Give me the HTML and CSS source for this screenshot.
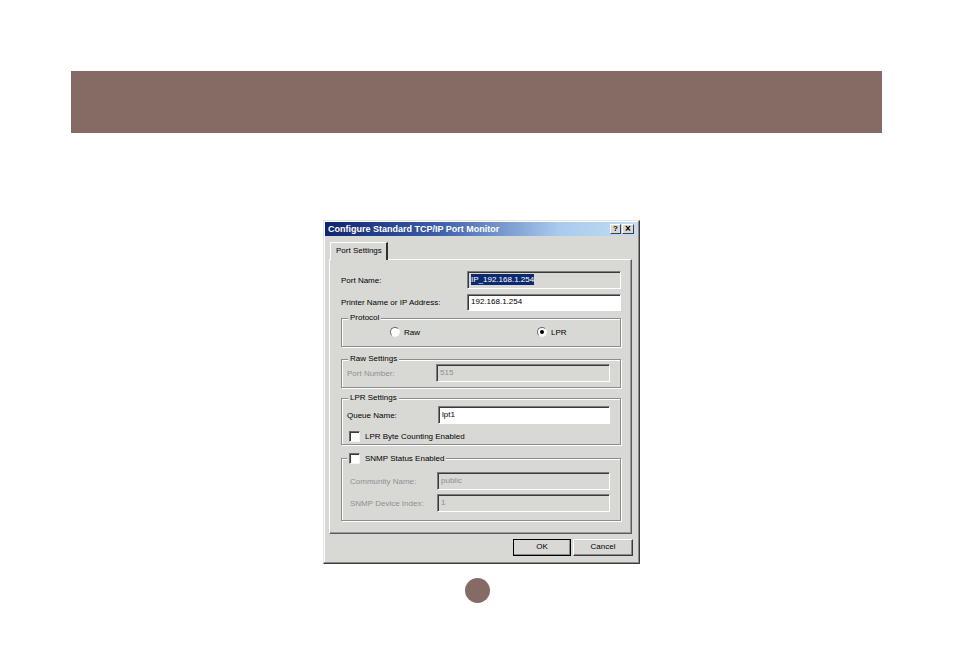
FILE: index.html
```html
<!DOCTYPE html>
<html>
<head>
<meta charset="utf-8">
<title>Configure Standard TCP/IP Port Monitor</title>
<link rel="stylesheet" href="styles.css">
</head>
<body>
<div class="banner"></div>

<div class="dialog">
  <div class="titlebar">
    <span class="title">Configure Standard TCP/IP Port Monitor</span>
    <div class="tbtns">
      <span class="tbtn">?</span>
      <span class="tbtn x">×</span>
    </div>
  </div>
  <div class="dbody">
    <div class="tabs"><div class="tab">Port Settings</div></div>
    <div class="panel">
      <div class="row r1">
        <span class="lbl">Port Name:</span>
        <div class="field ro w154"><span class="sel">IP_192.168.1.254</span></div>
      </div>
      <div class="row r2">
        <span class="lbl">Printer Name or IP Address:</span>
        <div class="field w154 h17">192.168.1.254</div>
      </div>

      <div class="group g-proto">
        <div class="legend">Protocol</div>
        <div class="radios">
          <label class="radio-item raw"><span class="radio"></span>Raw</label>
          <label class="radio-item lpr"><span class="radio on"></span>LPR</label>
        </div>
      </div>

      <div class="group g-raw">
        <div class="legend">Raw Settings</div>
        <div class="grow gr1">
          <span class="lbl dis">Port Number:</span>
          <div class="field ro dis w174">515</div>
        </div>
      </div>

      <div class="group g-lpr">
        <div class="legend">LPR Settings</div>
        <div class="grow gr1 lq">
          <span class="lbl">Queue Name:</span>
          <div class="field w172">lpt1</div>
        </div>
        <label class="check-row"><span class="check"></span>LPR Byte Counting Enabled</label>
      </div>

      <div class="group g-snmp">
        <div class="legend lcheck"><span class="check"></span>SNMP Status Enabled</div>
        <div class="grow gs1">
          <span class="lbl dis">Community Name:</span>
          <div class="field ro dis w173">public</div>
        </div>
        <div class="grow gs2">
          <span class="lbl dis">SNMP Device Index:</span>
          <div class="field ro dis w173">1</div>
        </div>
      </div>
    </div>
    <div class="buttons">
      <div class="btn ok">OK</div>
      <div class="btn cancel">Cancel</div>
    </div>
  </div>
</div>

<div class="dot"></div>
</body>
</html>
```

FILE: styles.css
```css
* { box-sizing: border-box; }
html, body { margin: 0; padding: 0; background: #ffffff; }
body {
  width: 954px;
  height: 664px;
  overflow: hidden;
  font-family: "Liberation Sans", Arial, sans-serif;
  font-size: 8px;
  color: #000;
}

.banner {
  margin: 71px 0 0 71px;
  width: 811px;
  height: 62px;
  background: #866a64;
}

.dialog {
  margin: 87px 0 0 323px;
  width: 317px;
  height: 344px;
  background: #d8d9d5;
  border: 1px solid;
  border-color: #e4e4e0 #3c3c3c #3c3c3c #e4e4e0;
  box-shadow: inset -1px -1px 0 #8a8a88, inset 1px 1px 0 #ffffff;
  padding: 1px 2px 1px 1px;
  display: flex;
  flex-direction: column;
}

.titlebar {
  height: 14px;
  background: linear-gradient(90deg, #10246e 0%, #3a5ca8 35%, #a9cbee 75%, #c2dcf4 100%);
  display: flex;
  align-items: center;
  padding: 0 3px 0 3px;
}
.title {
  color: #fff;
  font-weight: bold;
  font-size: 9px;
  white-space: nowrap;
}
.tbtns { margin-left: auto; display: flex; gap: 1px; }
.tbtn {
  width: 11px;
  height: 10px;
  background: #d8d9d5;
  border: 1px solid;
  border-color: #fff #404040 #404040 #fff;
  font-weight: bold;
  font-size: 8px;
  line-height: 8px;
  text-align: center;
  color: #000;
}
.tbtn.x { width: 12px; font-size: 10px; line-height: 7px; }

.dbody {
  padding: 6px 0 0 4px;
  display: flex;
  flex-direction: column;
}

.tabs { display: flex; height: 17px; padding-left: 1px; position: relative; z-index: 2; }
.tab {
  width: 58px;
  height: 18px;
  background: #d8d9d5;
  border: 1px solid;
  border-bottom: none;
  border-color: #fff #303030 transparent #fff;
  border-right-width: 2px;
  padding: 3px 0 0 5px;
  white-space: nowrap;
}

.panel {
  width: 303px;
  height: 275px;
  border: 1px solid;
  border-color: #ffffff #5c5c5c #5c5c5c #ffffff;
  box-shadow: inset -1px -1px 0 #9a9a98;
  padding: 0 10px 0 11px;
  display: flex;
  flex-direction: column;
}

.row { display: flex; align-items: center; justify-content: space-between; }
.r1 { margin-top: 11px; }
.r2 { margin-top: 5px; }

.lbl { white-space: nowrap; }
.lbl.dis { color: #8f8f8f; }

.field {
  height: 18px;
  background: #fff;
  border: 1px solid;
  border-color: #7c7c7c #ffffff #ffffff #7c7c7c;
  box-shadow: inset 1px 1px 0 #3a3a3a;
  padding: 3px 0 0 3px;
  white-space: nowrap;
}
.field.h17 { height: 17px; padding-top: 2px; }
.field.ro { background: #d8d9d5; }
.field.dis { color: #8f8f8f; }
.w154 { width: 154px; }
.w172 { width: 172px; }
.w173 { width: 173px; }
.w174 { width: 174px; }
.sel { background: #0c2a70; color: #fff; padding: 1px 0; }

.group {
  position: relative;
  width: 280px;
  border: 1px solid #8c8c8a;
  box-shadow: inset 1px 1px 0 #ffffff, 1px 1px 0 #ffffff;
}
.legend {
  position: absolute;
  top: -6px;
  left: 6px;
  padding: 0 2px;
  background: #d8d9d5;
  line-height: 10px;
  white-space: nowrap;
}
.legend.lcheck { display: flex; align-items: center; gap: 5px; left: 5px; top: -6px; }

.g-proto { margin-top: 7px; height: 29px; }
.g-raw { margin-top: 12px; height: 29px; }
.g-lpr { margin-top: 10px; height: 47px; }
.g-snmp { margin-top: 13px; height: 63px; }

.radios { display: flex; padding: 8px 0 0 48px; }
.radio-item { display: flex; align-items: center; gap: 4px; }
.radio-item.lpr { margin-left: 117px; }
.radio {
  width: 10px;
  height: 10px;
  border-radius: 50%;
  background: #fff;
  border: 1px solid;
  border-color: #6a6a6a #f4f4f4 #f4f4f4 #6a6a6a;
  display: flex;
  align-items: center;
  justify-content: center;
}
.radio.on::after {
  content: "";
  width: 4px;
  height: 4px;
  border-radius: 50%;
  background: #000;
}

.grow { display: flex; align-items: center; justify-content: space-between; padding: 0 10px 0 5px; }
.g-raw .gr1 { margin-top: 4px; }
.g-lpr .lq { margin-top: 7px; padding-right: 10px; }
.gs1 { margin-top: 13px; padding-left: 8px; }
.gs2 { margin-top: 4px; padding-left: 8px; }

.check-row { display: flex; align-items: center; gap: 5px; margin: 7px 0 0 7px; }
.check {
  width: 11px;
  height: 11px;
  background: #fff;
  border: 1px solid;
  border-color: #6a6a6a #f4f4f4 #f4f4f4 #6a6a6a;
  box-shadow: inset 1px 1px 0 #3a3a3a;
  flex: none;
}

.buttons {
  display: flex;
  justify-content: flex-end;
  gap: 2px;
  width: 304px;
  margin-top: 5px;
}
.btn {
  height: 17px;
  border: 1px solid;
  border-color: #ffffff #3a3a3a #3a3a3a #ffffff;
  box-shadow: inset -1px -1px 0 #8a8a88;
  text-align: center;
  line-height: 14px;
}
.btn.ok { width: 58px; outline: 1px solid #000; outline-offset: -1px; border-color: #fff #222 #222 #fff; }
.btn.cancel { width: 60px; }

.dot {
  margin: 14px 0 0 465px;
  width: 25px;
  height: 25px;
  border-radius: 50%;
  background: #866a66;
}
```
